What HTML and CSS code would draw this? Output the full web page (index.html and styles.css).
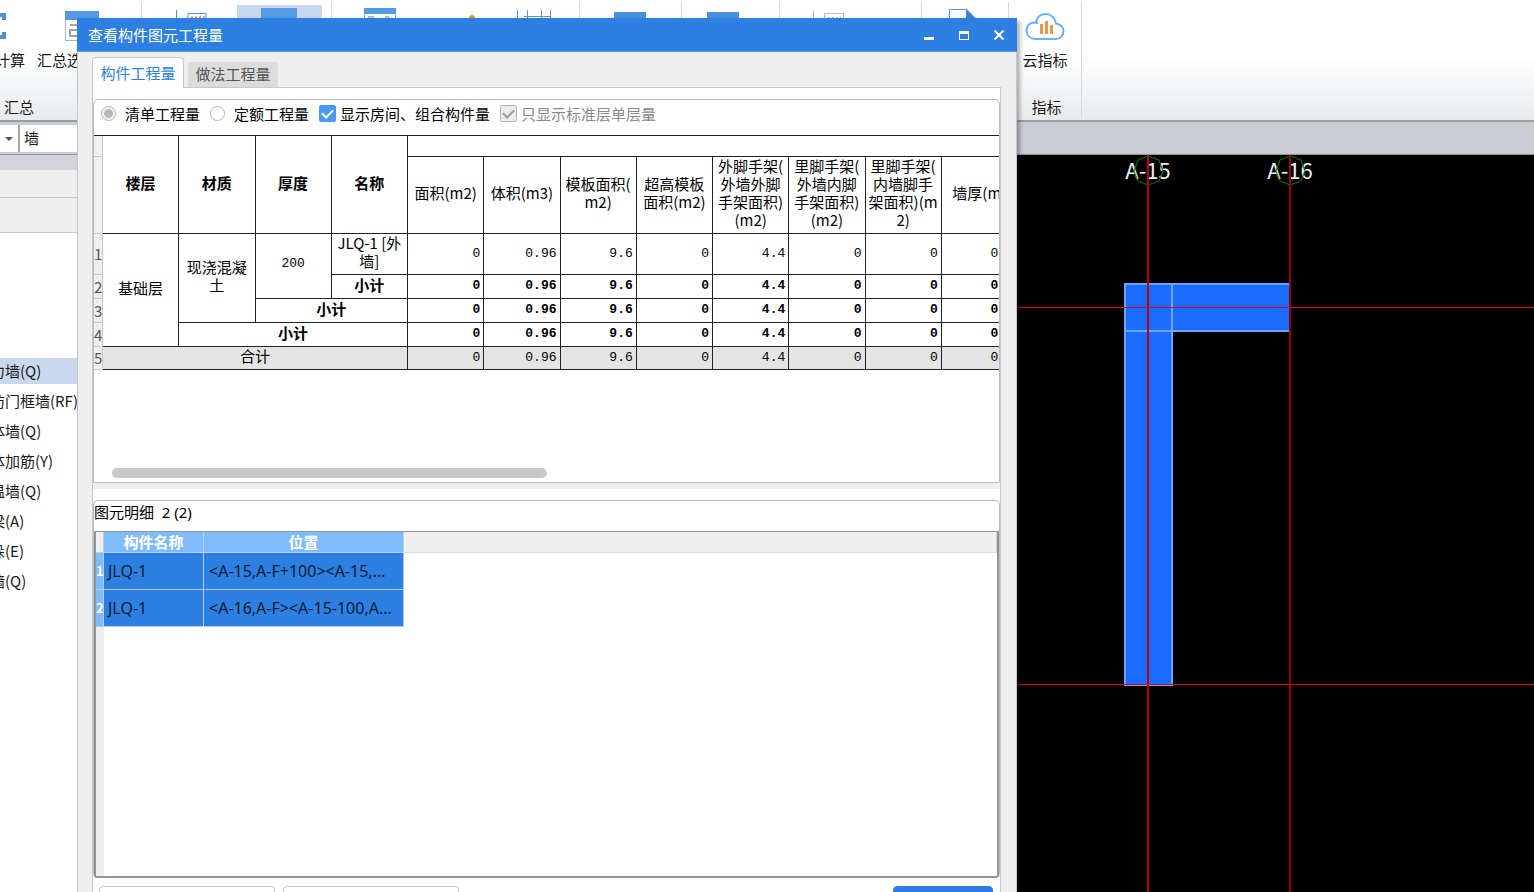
FILE: index.html
```html
<!DOCTYPE html>
<html lang="zh-CN">
<head>
<meta charset="utf-8">
<title>查看构件图元工程量</title>
<link rel="stylesheet" href="styles.css">
</head>
<body>
<div class="app">
  <header class="ribbon">
    <section class="group group-sum">
      <div class="tools">
        <button class="tool" type="button">
          <svg width="32" height="32" viewBox="0 0 32 32"><path d="M25 10V5H4l11 11L4 27h21v-5" fill="none" stroke="#4a8fdc" stroke-width="4"/></svg>
          <span>汇总计算</span>
        </button>
        <button class="tool" type="button">
          <svg width="36" height="32" viewBox="0 0 36 32"><rect x="1.500" y="1.500" width="33" height="29" fill="#fff" stroke="#8db9ec"/><path d="M1 1h34v9H1z" fill="#559ae4"/><path d="M6 15h10M6 20h8v6H6z" fill="none" stroke="#a0a4a8" stroke-width="2"/></svg>
          <span>汇总选中图元</span>
        </button>
      </div>
      <div class="group-name">汇总</div>
    </section>
    <section class="group group-report">
      <svg width="189" height="40" viewBox="0 0 189 40"><path d="M34.500 10v30" stroke="#4a8fdc"/><rect x="46" y="13.500" width="18" height="20" fill="#fff" stroke="#559ae4"/><path d="M49 17.500h14" stroke="#e07b5a" stroke-width="2" stroke-dasharray="2 2"/><path d="M95 5h85v35H95z" fill="#c8d8ef"/><path d="M119 8h36v20h-36z" fill="#559ae4"/></svg>
    </section>
    <section class="group group-view">
      <svg width="247" height="40" viewBox="0 0 247 40"><rect x="32.500" y="8.500" width="31" height="25" fill="#fff" stroke="#8db9ec"/><path d="M32 8h32v6H32z" fill="#559ae4"/><path d="M36 17h6M53 17h4" stroke="#777"/><circle cx="140" cy="18" r="3" fill="#f08a3c"/><path d="M185.500 10v20M195.500 10v20M209.500 10v20M218.500 10v20M192 16.500h27" stroke="#559ae4"/></svg>
    </section>
    <section class="group group-a">
      <svg width="101" height="40" viewBox="0 0 101 40"><path d="M34 12h32v20H34z" fill="#4a8fdc"/></svg>
    </section>
    <section class="group group-b">
      <svg width="97" height="40" viewBox="0 0 97 40"><path d="M25 12h32v20H25z" fill="#4a8fdc"/></svg>
    </section>
    <section class="group group-c">
      <svg width="141" height="40" viewBox="0 0 141 40"><path d="M33.500 10v30" stroke="#bbb"/><rect x="44.500" y="13.500" width="19" height="20" fill="#fff" stroke="#bbb"/><path d="M48 17.500h13" stroke="#bbb" stroke-dasharray="2 2"/></svg>
    </section>
    <section class="group group-d">
      <svg width="86" height="40" viewBox="0 0 86 40"><path d="M27.500 30V9.500H45l8 8V30" fill="#fff" stroke="#559ae4"/><path d="M44 9l9 9h-9z" fill="#3f80cc"/></svg>
    </section>
    <section class="group group-cloud">
      <div class="tools">
        <button class="tool" type="button">
          <svg width="40" height="32" viewBox="0 0 40 32"><path d="M11 29C5 29 1.500 25.500 1.500 20.500S5 12.500 9.500 12.500c1.500 0 2.500.4 3.500 1M11 12C12 7 16 4 20.500 4 26 4 30.500 8 31 13.500c4 .5 7.500 3.500 7.500 7.500 0 5-3.500 8-8 8H11" fill="none" stroke="#6bb0fa" stroke-width="2"/><path d="M16.500 14v10M21.500 11v13M26.500 15v9" stroke="#f5924a" stroke-width="3"/></svg>
          <span>云指标</span>
        </button>
      </div>
      <div class="group-name">指标</div>
    </section>
  </header>

  <div class="context-bar">
    <button class="drop" type="button" aria-label="楼层"><i class="caret"></i></button>
    <input class="kind" type="text" value="墙" aria-label="构件类型">
  </div>

  <main class="workspace">
    <nav class="side">
      <div class="side-cap"></div>
      <div class="side-bar"></div>
      <div class="side-bar side-tools"></div>
      <ul class="kinds">
        <li class="active">剪力墙(Q)</li>
        <li>人防门框墙(RF)</li>
        <li>砌体墙(Q)</li>
        <li>砌体加筋(Y)</li>
        <li>保温墙(Q)</li>
        <li>暗梁(A)</li>
        <li>墙垛(E)</li>
        <li>幕墙(Q)</li>
      </ul>
    </nav>
    <svg class="drawing" role="img" aria-label="墙平面图">
      <g class="wall">
        <rect x="1048" y="129" width="165" height="47"/>
        <rect x="1048" y="129" width="47" height="401"/>
        <rect x="1048" y="129" width="47" height="47"/>
      </g>
      <g class="axis-name">
        <text x="1071" y="24">A-15</text>
        <text x="1213" y="24">A-16</text>
      </g>
      <g class="bubble">
        <path d="M1071 1l11 4 4 11-4 10-11 4-10-4-4-10 4-11z"/>
        <path d="M1213 1l11 4 4 11-4 10-11 4-10-4-4-10 4-11z"/>
      </g>
      <g class="axis">
        <rect x="1070" y="0" width="2" height="100%"/>
        <rect class="dim" x="1212" y="0" width="2" height="100%"/>
        <rect x="0" y="152" width="100%" height="1"/>
        <rect x="0" y="529" width="100%" height="1"/>
      </g>
    </svg>
  </main>
</div>

<div class="dialog" role="dialog" aria-labelledby="dialog-title">
  <div class="titlebar">
    <h1 id="dialog-title">查看构件图元工程量</h1>
    <button type="button" aria-label="最小化"><svg width="12" height="12" viewBox="0 0 12 12"><path d="M1 8h10v3H1z" fill="#fff"/></svg></button>
    <button type="button" aria-label="最大化"><svg width="12" height="12" viewBox="0 0 12 12"><path d="M1 2h10v9H1zM2 5v5h8V5z" fill="#fff" fill-rule="evenodd"/></svg></button>
    <button type="button" aria-label="关闭"><svg width="12" height="12" viewBox="0 0 12 12"><path d="M1.500 1.500l9 9M10.500 1.500l-9 9" stroke="#fff" stroke-width="2"/></svg></button>
  </div>

  <div class="tabs" role="tablist">
    <button class="tab current" type="button" role="tab" aria-selected="true">构件工程量</button>
    <button class="tab" type="button" role="tab" aria-selected="false">做法工程量</button>
  </div>

  <div class="page">
    <section class="panel quantities">
      <div class="options">
        <label class="opt"><input type="radio" name="mode" checked>清单工程量</label>
        <label class="opt"><input type="radio" name="mode">定额工程量</label>
        <label class="opt check"><input type="checkbox" checked>显示房间、组合构件量</label>
        <label class="opt check off"><input type="checkbox" checked disabled>只显示标准层单层量</label>
      </div>
      <div class="sheet-view">
        <table class="sheet">
          <colgroup><col class="c-no"><col span="12"></colgroup>
          <thead>
            <tr class="r-top"><td class="no"></td><th rowspan="2">楼层</th><th rowspan="2">材质</th><th rowspan="2">厚度</th><th rowspan="2">名称</th><th colspan="8"></th></tr>
            <tr class="r-head"><td class="no"></td><th>面积(m2)</th><th>体积(m3)</th><th>模板面积(<br>m2)</th><th>超高模板<br>面积(m2)</th><th>外脚手架(<br>外墙外脚<br>手架面积)<br>(m2)</th><th>里脚手架(<br>外墙内脚<br>手架面积)<br>(m2)</th><th>里脚手架(<br>内墙脚手<br>架面积)(m<br>2)</th><th>墙厚(m)</th></tr>
          </thead>
          <tbody>
            <tr class="r-item"><td class="no">1</td><td rowspan="4">基础层</td><td rowspan="3">现浇混凝<br>土</td><td rowspan="2" class="digits">200</td><td>JLQ-1 [外<br>墙]</td><td class="n">0</td><td class="n">0.96</td><td class="n">9.6</td><td class="n">0</td><td class="n">4.4</td><td class="n">0</td><td class="n">0</td><td class="n">0.2</td></tr>
            <tr class="sub"><td class="no">2</td><td>小计</td><td class="n">0</td><td class="n">0.96</td><td class="n">9.6</td><td class="n">0</td><td class="n">4.4</td><td class="n">0</td><td class="n">0</td><td class="n">0.2</td></tr>
            <tr class="sub"><td class="no">3</td><td colspan="2">小计</td><td class="n">0</td><td class="n">0.96</td><td class="n">9.6</td><td class="n">0</td><td class="n">4.4</td><td class="n">0</td><td class="n">0</td><td class="n">0.2</td></tr>
            <tr class="sub"><td class="no">4</td><td colspan="3">小计</td><td class="n">0</td><td class="n">0.96</td><td class="n">9.6</td><td class="n">0</td><td class="n">4.4</td><td class="n">0</td><td class="n">0</td><td class="n">0.2</td></tr>
            <tr class="total"><td class="no">5</td><td colspan="4">合计</td><td class="n">0</td><td class="n">0.96</td><td class="n">9.6</td><td class="n">0</td><td class="n">4.4</td><td class="n">0</td><td class="n">0</td><td class="n">0.2</td></tr>
          </tbody>
        </table>
      </div>
      <div class="hscroll"><div class="thumb"></div></div>
    </section>

    <div class="splitter"></div>

    <section class="panel details">
      <h2>图元明细&nbsp; 2 (2)</h2>
      <div class="grid-view">
        <table class="grid">
          <colgroup><col class="g-no"><col class="g-name"><col class="g-pos"></colgroup>
          <thead><tr><td class="gno blank"></td><th>构件名称</th><th>位置</th></tr></thead>
          <tbody>
            <tr><td class="gno">1</td><td>JLQ-1</td><td>&lt;A-15,A-F+100&gt;&lt;A-15,...</td></tr>
            <tr><td class="gno">2</td><td>JLQ-1</td><td>&lt;A-16,A-F&gt;&lt;A-15-100,A...</td></tr>
          </tbody>
        </table>
        <div class="head-rest"></div>
      </div>
    </section>

    <div class="actions">
      <button class="btn" type="button" aria-label="设置分类条件及工程量输出"></button>
      <button class="btn" type="button" aria-label="导出到Excel"></button>
      <button class="btn primary" type="button" aria-label="退出"></button>
    </div>
  </div>
</div>
</body>
</html>
```
FILE: styles.css
```css
* { box-sizing: border-box; }

body {
  margin: 0;
  height: 100vh;
  overflow: hidden;
  position: relative;
  font: 15px/20px "Noto Sans CJK SC", sans-serif;
  color: #1a1a1a;
  background: #fff;
}

button, input { font: inherit; color: inherit; }
button { padding: 0; border: 0; background: none; }

/* Application behind the dialog */
.app { height: 100%; display: flex; flex-direction: column; overflow: hidden; }

.ribbon {
  flex: none;
  height: 122px;
  display: flex;
  padding: 2px 0 3px;
  background: linear-gradient(#fff 45%, #e8ebed);
  border-bottom: 2px solid #9b9fa2;
}
.group {
  flex: none;
  display: flex;
  flex-direction: column;
  justify-content: space-between;
  border-right: 1px solid #d6d8da;
  overflow: hidden;
}
.group > svg { margin-top: -2px; }
.group-sum { width: 177px; margin-left: -35px; }
.group-report { width: 190px; }
.group-view { width: 248px; }
.group-a { width: 102px; }
.group-b { width: 98px; }
.group-c { width: 142px; }
.group-d { width: 87px; }
.group-cloud { width: 73px; align-items: center; }
.tools { display: flex; gap: 12px; padding-top: 8px; }
.tool { display: flex; flex-direction: column; align-items: center; gap: 8px; white-space: nowrap; }
.group-sum .group-name { padding-left: 39px; }
.group-cloud .group-name { padding-left: 3px; }

.context-bar {
  flex: none;
  height: 33px;
  display: flex;
  padding: 3px 0 2px;
  background: #c9ccd1;
  border-bottom: 1px solid #8f9499;
}
.drop { width: 20px; background: #fff; border-right: 2px solid #a4a8ac; display: flex; align-items: center; justify-content: center; }
.caret { border: 4px solid transparent; border-top-color: #555; border-bottom: 0; }
.kind { width: 120px; padding: 0 4px 2px; border: 0; background: #fff; }

.workspace { flex: 1; display: flex; min-height: 0; }
.side { flex: none; width: 77px; display: flex; flex-direction: column; overflow: hidden; background: #fff; }
.side-cap { height: 15px; background: #d2d4d9; }
.side-bar { height: 28px; background: #eee; border-bottom: 1px solid #c4c7ca; }
.side-tools { height: 35px; }
.kinds { list-style: none; margin: 0; padding: 125px 0 0; display: flex; flex-direction: column; gap: 4px; }
.kinds li { height: 26px; line-height: 26px; white-space: nowrap; text-indent: -25px; }
.kinds .active { background: #c8d8ef; }

.drawing { flex: 1; min-width: 0; height: 100%; background: #000; }
.wall rect { fill: #1a6cff; stroke: #6fa2ff; stroke-width: 2px; }
.axis-name { fill: #eee; font-size: 22px; text-anchor: middle; }
.bubble { fill: none; stroke: #008000; }
.axis { fill: #e00010; }
.axis rect:first-child { fill: #b8000c; }
.axis .dim { fill: #980008; }

/* Dialog window */
.dialog {
  position: absolute;
  top: 18px;
  left: 77px;
  width: 940px;
  bottom: -24px;
  display: flex;
  flex-direction: column;
  background: #efefef;
  border: solid #c3c8d0;
  border-width: 0 1px;
  box-shadow: 3px 3px 4px rgba(0, 0, 0, .3);
}
.titlebar {
  flex: none;
  height: 34px;
  margin: 0 -1px;
  padding: 0 12px 0 11px;
  display: flex;
  align-items: center;
  gap: 23px;
  background: #2d80e1;
  border-bottom: 1px solid #5b9be8;
  color: #fff;
}
.titlebar h1 { flex: 1; margin: 0; font-size: 15px; line-height: 20px; font-weight: 400; }
.titlebar button { width: 12px; height: 12px; display: flex; }

.tabs { flex: none; display: flex; align-items: flex-end; gap: 4px; padding: 5px 14px 0; }
.tab { height: 25px; width: 90px; padding-bottom: 1px; background: #dcdcdc; color: #555; border-radius: 3px 3px 0 0; }
.tab.current {
  height: 31px;
  width: 92px;
  margin-bottom: -1px;
  background: #fff;
  color: #2d80e1;
  border: 1px solid #c6c8cb;
  border-bottom: 0;
  border-radius: 4px 4px 0 0;
  z-index: 1;
}

.page {
  flex: 1;
  min-height: 0;
  display: flex;
  flex-direction: column;
  margin: 0 15px 0 14px;
  padding-top: 11px;
  background: #fff;
  border: solid #c6c8cb;
  border-width: 1px 1px 0;
}
.panel { display: flex; flex-direction: column; border: 1px solid #b9bcc0; border-radius: 5px; }
.quantities { flex: none; height: 384px; overflow: hidden; border-radius: 5px 5px 0 0; }

.options { flex: none; height: 35px; display: flex; align-items: center; gap: 10px; padding: 0 7px 8px; color: #000; }
.opt { display: flex; align-items: center; gap: 9px; white-space: nowrap; }
.opt.check { gap: 4px; }
.opt.off { color: #8a8a8a; }
.opt input { appearance: none; margin: 0; width: 15px; height: 15px; border: 1px solid #b4b4b4; border-radius: 50%; background: #fff; }
.opt input[type="radio"]:checked { background: radial-gradient(circle, #b8b8b8 4px, #f2f2f2 5px); }
.opt input[type="checkbox"] { width: 17px; height: 17px; border-radius: 2px; border-color: #4a9af5; background: #4a9af5; display: grid; place-items: center; }
.opt input[type="checkbox"]::after { content: ""; width: 9px; height: 5px; margin-bottom: 3px; border: solid #fff; border-width: 0 0 2px 2px; transform: rotate(-45deg); }
.opt input[type="checkbox"]:disabled { background: #ececec; border-color: #b4b4b4; }
.opt input[type="checkbox"]:disabled::after { border-color: #999; }

.sheet-view { flex: 1; overflow: hidden; }
.sheet { width: 924px; table-layout: fixed; border-collapse: separate; border-spacing: 0; border-top: 1px solid #222; color: #000; }
.c-no { width: 9px; }
.sheet th, .sheet td { padding: 0 0 4px; border: solid #222; border-width: 0 1px 1px 0; text-align: center; line-height: 18px; white-space: nowrap; }
.r-top { height: 21px; }
.r-head { height: 77px; }
.r-head th { font-weight: 400; }
.r-item { height: 41px; }
.sub { height: 24px; }
.total { height: 23px; }
.sub td { font-weight: 700; }
.total td { background: #e4e4e4; }
.sheet td.no { padding-bottom: 0; background: #efefef; border-color: #c8c8c8; color: #555; font-weight: 400; }
.sheet .digits { font: 13px/18px "Liberation Mono", monospace; }
.sheet td.n { padding: 0 3px 1px 0; text-align: right; font-family: "Liberation Mono", monospace; font-size: 13px; }

.hscroll { flex: none; padding: 0 18px 4px; }
.thumb { width: 50%; max-width: 435px; height: 10px; border-radius: 5px; background: #c9c9c9; }

.splitter { flex: none; height: 6px; margin-bottom: 11px; background: #efefef; }

.details { flex: 1; min-height: 0; border-bottom: 0; }
.details h2 { flex: none; height: 30px; margin: 0; padding-top: 1px; font: 400 15px/20px "Noto Sans", "Noto Sans CJK SC", sans-serif; color: #000; }
.grid-view {
  flex: 1;
  display: flex;
  align-items: flex-start;
  border: solid #8f949d;
  border-width: 1px 2px 2px;
  border-radius: 0 0 3px 3px;
  background: linear-gradient(90deg, #efefef 8px, #fff 8px);
}
.grid { flex: none; width: 308px; table-layout: fixed; border-collapse: separate; border-spacing: 0; }
.g-no { width: 8px; }
.g-name { width: 100px; }
.g-pos { width: 200px; }
.grid th { height: 21px; padding: 0; background: #80bbfb; color: #fff; line-height: 20px; border: solid #b8cfe8; border-width: 0 1px 1px 0; }
.grid td { height: 37px; padding: 0 4px; background: #2d80e1; color: #0a1c33; border: solid #b4cdec; border-width: 0 1px 1px 0; white-space: nowrap; }
.grid tbody td + td { font-family: "Noto Sans", "Noto Sans CJK SC", sans-serif; font-size: 16px; }
.grid tbody td + td + td { padding-left: 5px; }
.grid .gno { padding: 0; background: #80bbfb; color: #fff; font-weight: 700; font-size: 13px; text-align: center; }
.grid .blank { height: 21px; background: #efefef; }
.head-rest { flex: 1; height: 21px; background: #efefef; border-bottom: 1px solid #ddd; border-right: 1px solid #ccc; }

.actions { flex: none; display: flex; gap: 8px; padding: 8px 7px 0 6px; }
.btn { width: 176px; height: 30px; background: #fff; border: 1px solid #c4c7ca; border-radius: 4px; }
.primary { width: 100px; margin-left: auto; background: #2d80e1; border-color: #2d80e1; }
```
